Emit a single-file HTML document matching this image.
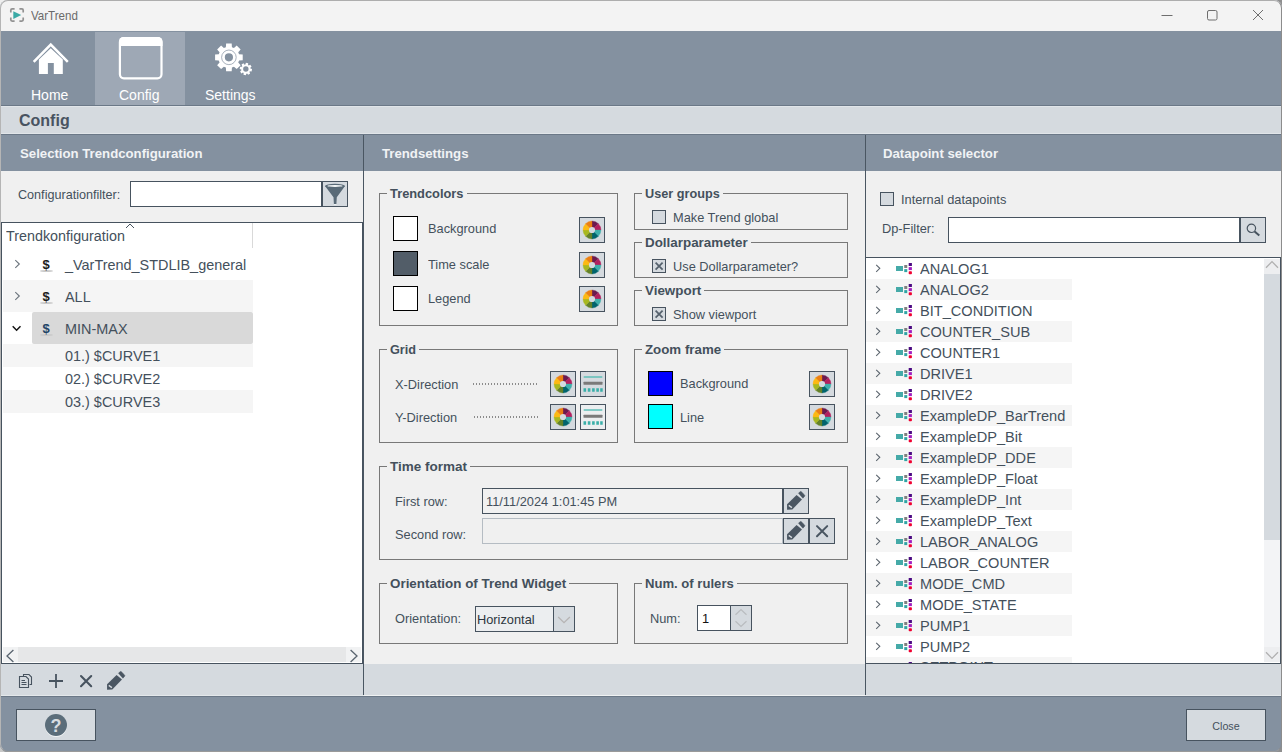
<!DOCTYPE html>
<html><head><meta charset="utf-8"><title>VarTrend</title>
<style>
*{box-sizing:border-box;margin:0;padding:0}
html,body{width:1282px;height:752px;overflow:hidden;background:#8f8f8f}
body{font-family:"Liberation Sans",sans-serif;font-size:13px;color:#44505c;position:relative}
.a{position:absolute}
.win{left:0;top:0;width:1282px;height:752px;background:#8491a0;border-radius:8px;overflow:hidden}
.frame{left:0;top:0;width:1282px;height:752px;border:1px solid #b0b0b0;border-color:#adadad #8c8c8c #9a9a9a #b5b5b5;border-radius:8px;pointer-events:none}
.tb{left:0;top:0;width:1282px;height:31px;background:#f3f3f3}
.t{white-space:nowrap;line-height:16px;margin-top:1px;font-size:13.5px;transform:scaleX(.948);transform-origin:0 0}
.b{font-weight:bold}
.hdr{color:#f1f3f5;font-weight:bold;font-size:13.2px;transform:none}
.lt{background:#d5dadf}
.pn{background:#f0f0f0}
.dk{background:#4a5662}
.fs{border:1px solid #787878}
.lg{background:#f0f0f0;font-weight:bold;font-size:13px;padding:0 3px;line-height:16px;white-space:nowrap;margin-top:1px}
.btn{background:#d5dadf;border:1px solid #47535f}
.sw{border:1px solid #000;width:25px;height:25px}
.cb{width:14px;height:14px;border:1px solid #47535f;background:#d5dadf}
.tree{font-size:14.5px;color:#44505c}
.tree .t{font-size:15px;line-height:18px;transform:scaleX(.962)}
.rt .t{transform:scaleX(.972)}
</style></head><body>
   <div class="a" style="left:0;top:0;width:10px;height:10px;background:#eee"></div><div class="a" style="left:0;top:742px;width:10px;height:10px;background:#c8c8c8"></div>
<div class="a win">
<!-- title bar -->
<div class="a tb"></div>
<div class="a t" style="left:31px;top:7px;font-size:12.2px;color:#6a6a6a">VarTrend</div>
<svg class="a" style="left:0;top:0" width="1282" height="31" viewBox="0 0 1282 31">
<path d="M10.8 12.4 V10.2 Q10.8 8.9 12.1 8.9 H14.6 M19.4 8.9 H21.9 Q23.2 8.9 23.2 10.2 V12.4 M23.2 17.6 V19.8 Q23.2 21.1 21.9 21.1 H19.4 M14.6 21.1 H12.1 Q10.8 21.1 10.8 19.8 V17.6" fill="none" stroke="#929292" stroke-width="1.7"/>
<path d="M13.3 11.2 L21.2 15 L13.3 18.9 Z" fill="#3aa9a5"/>
<path d="M1161.5 15.5 H1172.5" stroke="#6e6e6e" stroke-width="1"/>
<rect x="1207.5" y="10.5" width="9.5" height="9.5" rx="1.5" fill="none" stroke="#6e6e6e" stroke-width="1"/>
<path d="M1253 10 L1263 20 M1263 10 L1253 20" stroke="#6e6e6e" stroke-width="1"/>
</svg>
<!-- toolbar -->
<div class="a" style="left:0;top:31px;width:1282px;height:74px;background:#8491a0"></div>
<div class="a" style="left:95px;top:32px;width:90px;height:73px;background:#9ea8b5"></div>
<div class="a" style="left:0;top:105px;width:1282px;height:1px;background:#6b7887"></div>
<div class="a t" style="left:31px;top:86px;font-size:14px;color:#fff;transform:none">Home</div>
<div class="a t" style="left:119px;top:86px;font-size:14px;color:#fff;transform:none">Config</div>
<div class="a t" style="left:205px;top:86px;font-size:14px;color:#fff;transform:none">Settings</div>
<svg class="a" style="left:0;top:0" width="300" height="106" viewBox="0 0 300 106">
<path d="M33.7 61.9 L50.75 44.6 L67.8 61.9" fill="none" stroke="#fff" stroke-width="2.5"/>
<path d="M38.9 74.1 V59.4 L50.75 48.3 L62.8 59.4 V74.1 H53.8 V63 H47.9 V74.1 Z" fill="#fff"/>
<rect x="119.9" y="38.1" width="41.6" height="40.2" rx="4" ry="4" fill="none" stroke="#fff" stroke-width="2.2"/>
<path d="M119 46 V41.5 a4.5 4.5 0 0 1 4.5 -4.5 H158 a4.5 4.5 0 0 1 4.5 4.5 V46 Z" fill="#fff"/>
<path fill-rule="evenodd" fill="#fff" d="M225.87 47.19 L226.10 43.53 L231.70 43.53 L231.93 47.19 L233.94 48.02 L236.69 45.60 L240.65 49.56 L238.23 52.31 L239.06 54.32 L242.72 54.55 L242.72 60.15 L239.06 60.38 L238.23 62.39 L240.65 65.14 L236.69 69.10 L233.94 66.68 L231.93 67.51 L231.70 71.17 L226.10 71.17 L225.87 67.51 L223.86 66.68 L221.11 69.10 L217.15 65.14 L219.57 62.39 L218.74 60.38 L215.08 60.15 L215.08 54.55 L218.74 54.32 L219.57 52.31 L217.15 49.56 L221.11 45.60 L223.86 48.02 Z M233 57.35 a4.1 4.1 0 1 0 -8.2 0 a4.1 4.1 0 1 0 8.2 0 Z"/>
<circle cx="228.9" cy="57.35" r="7.3" fill="none" stroke="#8491a0" stroke-width="0.7"/>
<path fill-rule="evenodd" fill="#fff" d="M245.39 64.47 L245.91 62.85 L248.21 63.32 L248.06 65.01 L248.76 65.49 L250.28 64.71 L251.57 66.66 L250.26 67.75 L250.43 68.59 L252.05 69.11 L251.58 71.41 L249.89 71.26 L249.41 71.96 L250.19 73.48 L248.24 74.77 L247.15 73.46 L246.31 73.63 L245.79 75.25 L243.49 74.78 L243.64 73.09 L242.94 72.61 L241.42 73.39 L240.13 71.44 L241.44 70.35 L241.27 69.51 L239.65 68.99 L240.12 66.69 L241.81 66.84 L242.29 66.14 L241.51 64.62 L243.46 63.33 L244.55 64.64 Z M248.55 69.05 a2.7 2.7 0 1 0 -5.4 0 a2.7 2.7 0 1 0 5.4 0 Z"/>
</svg>
<!-- title band -->
<div class="a lt" style="left:0;top:106px;width:1282px;height:28px"></div>
<div class="a" style="left:0;top:134px;width:1282px;height:1px;background:#6b7887"></div>
<div class="a" style="left:0;top:106px;width:1282px;height:1px;background:#e1e5e9"></div>
<div class="a" style="left:0;top:133px;width:1282px;height:1px;background:#e1e5e9"></div>
<div class="a t b" style="left:19px;top:111px;font-size:16px;line-height:18px;color:#485361;transform:none">Config</div>
<!-- PANELS placeholder -->
<!-- LEFT PANEL -->
<div class="a" style="left:0;top:135px;width:363px;height:36px;background:#8491a0"></div>
<div class="a t hdr" style="left:20px;top:145px">Selection Trendconfiguration</div>
<div class="a pn" style="left:0;top:171px;width:363px;height:493px"></div>
<div class="a t" style="left:18px;top:186px;font-size:13.3px">Configurationfilter:</div>
<div class="a" style="left:130px;top:181px;width:192px;height:26px;background:#fff;border:1px solid #47535f"></div>
<div class="a btn" style="left:322px;top:181px;width:26px;height:26px">
<svg class="a" style="left:0;top:0" width="24" height="24" viewBox="0 0 24 24"><path d="M2.00 4.00 L10.50 15.30 L10.90 21.90 L13.40 21.90 L13.80 15.30 L22.00 4.00 Z" fill="#596a77"/><ellipse cx="12" cy="3.9000000000000057" rx="10" ry="2.1" fill="#596a77"/><ellipse cx="12" cy="3.90" rx="7.6" ry="1" fill="#f4f6f7"/><path d="M11.00 22.60 H13.30" stroke="#f4f6f7" stroke-width="0.8"/></svg>
</div>
<!-- tree -->
<div class="a" style="left:1px;top:222px;width:362px;height:442px;background:#fff;border:1px solid #47535f"></div>
<div class="a tree" style="left:2px;top:223px;width:360px;height:424px;overflow:hidden">
 <div class="a" style="left:250px;top:0;width:1px;height:25px;background:#d9d9d9"></div>
 <div class="a t" style="left:3.5px;top:3px;font-size:14.9px">Trendkonfiguration</div>
 <svg class="a" style="left:122.5px;top:0px" width="10" height="6" viewBox="0 0 10 6"><path d="M1 5 L5 1 L9 5" fill="none" stroke="#47535f" stroke-width="1"/></svg>
 <div class="a" style="left:1px;top:57px;width:250px;height:32px;background:#f5f5f5"></div>
 <div class="a" style="left:30px;top:89px;width:221px;height:32px;background:#d9d9d9;border-radius:2px"></div>
 <div class="a" style="left:1px;top:121px;width:250px;height:23px;background:#f5f5f5"></div>
 <div class="a" style="left:1px;top:167px;width:250px;height:23px;background:#f5f5f5"></div>
 <div class="a t" style="left:63px;top:32px">_VarTrend_STDLIB_general</div>
 <div class="a t" style="left:63px;top:64px">ALL</div>
 <div class="a t" style="left:63px;top:96px">MIN-MAX</div>
 <div class="a t" style="left:63px;top:123px">01.) $CURVE1</div>
 <div class="a t" style="left:63px;top:146px">02.) $CURVE2</div>
 <div class="a t" style="left:63px;top:169px">03.) $CURVE3</div>
 <div class="a" style="left:38px;top:47px;width:13px;height:2px;border-radius:50%;background:#c9c9c9"></div>
 <div class="a t b" style="left:40.5px;top:33px;line-height:16px;font-size:13px;color:#1c1c1c;transform:none">$</div>
 <div class="a" style="left:38px;top:79px;width:13px;height:2px;border-radius:50%;background:#c9c9c9"></div>
 <div class="a t b" style="left:40.5px;top:65px;line-height:16px;font-size:13px;color:#1c1c1c;transform:none">$</div>
 <div class="a" style="left:38px;top:111px;width:13px;height:2px;border-radius:50%;background:#c9c9c9"></div>
 <div class="a t b" style="left:40.5px;top:97px;line-height:16px;font-size:13px;color:#1f4466;transform:none">$</div>
 <svg class="a" style="left:12px;top:36px" width="7" height="10" viewBox="0 0 7 10"><path d="M1.3 1.2 L5.3 5 L1.3 8.8" fill="none" stroke="#6a737c" stroke-width="1.1"/></svg>
 <svg class="a" style="left:12px;top:68px" width="7" height="10" viewBox="0 0 7 10"><path d="M1.3 1.2 L5.3 5 L1.3 8.8" fill="none" stroke="#6a737c" stroke-width="1.1"/></svg>
 <svg class="a" style="left:9px;top:101px" width="12" height="9" viewBox="0 0 12 9"><path d="M1.7 2.3 L5.6 6.2 L9.5 2.3" fill="none" stroke="#141414" stroke-width="1.5"/></svg>
</div>
<!-- h scrollbar -->
<div class="a" style="left:3px;top:647px;width:358px;height:15px;background:#e6e7e8"></div>
<div class="a" style="left:3px;top:647px;width:15px;height:15px;background:#f1f2f3"></div>
<div class="a" style="left:346px;top:647px;width:15px;height:15px;background:#f1f2f3"></div>
<svg class="a" style="left:5px;top:649px" width="10" height="14" viewBox="0 0 10 14"><path d="M8.4 1 L2 7 L8.4 13" fill="none" stroke="#59646f" stroke-width="1.3"/></svg>
<svg class="a" style="left:349px;top:649px" width="10" height="14" viewBox="0 0 10 14"><path d="M1.6 1 L8 7 L1.6 13" fill="none" stroke="#59646f" stroke-width="1.3"/></svg>
<!-- icon bar -->
<div class="a lt" style="left:0;top:664px;width:363px;height:31px"></div>
<svg class="a" style="left:18px;top:672px" width="16" height="18" viewBox="0 0 16 18"><path d="M5.5 4 L5.5 2.5 L11 2.5 L13.5 5 L13.5 12.5 L11.5 12.5" fill="none" stroke="#47535f" stroke-width="1.1"/><path d="M1.5 4.5 L8 4.5 L10.5 7 L10.5 15.5 L1.5 15.5 Z" fill="none" stroke="#47535f" stroke-width="1.1"/><path d="M3.5 8.5 H7 M3.5 10.5 H8.5 M3.5 12.5 H8.5" stroke="#47535f" stroke-width="1"/></svg>
<svg class="a" style="left:48px;top:673px" width="16" height="16" viewBox="0 0 16 16"><path d="M8 1 V15 M1 8 H15" stroke="#47535f" stroke-width="1.8"/></svg>
<svg class="a" style="left:78px;top:673px" width="16" height="16" viewBox="0 0 16 16"><path d="M3 3 L13.2 13.2 M13.2 3 L3 13.2" stroke="#47535f" stroke-width="2.1" stroke-linecap="round"/></svg>
<svg class="a pen" style="left:106px;top:670px" width="20" height="20" viewBox="0 0 20 20" viewBox="0 0 20 20"><path d="M1.08 14.26 L10.58 4.94 L15.98 9.6 L6.3 19.5 L1.08 19.66 Z" fill="#4a5662"/><path d="M12.5 3.2 L13.9 1.8 a1.1 1.1 0 0 1 1.5 0 L18.5 4.9 a1.1 1.1 0 0 1 0 1.5 L16.9 8.2 Z" fill="#4a5662" stroke="#4a5662" stroke-width="0.5" stroke-linejoin="round"/><path d="M2.76 15.37 L5.92 17.6" stroke="#d5dadf" stroke-width="1.3" fill="none"/></svg>
<div class="a dk" style="left:363px;top:135px;width:1px;height:560px"></div>
<!--LEFT-->
<!-- MIDDLE PANEL -->
<div class="a" style="left:364px;top:135px;width:501px;height:36px;background:#8491a0"></div>
<div class="a t hdr" style="left:382px;top:145px">Trendsettings</div>
<div class="a pn" style="left:364px;top:171px;width:501px;height:493px"></div>
<div class="a lt" style="left:364px;top:664px;width:501px;height:31px"></div>
<div class="a fs" style="left:379px;top:193px;width:239px;height:133px"></div>
<div class="a lg" style="left:387px;top:185px;font-size:12.85px">Trendcolors</div>
<div class="a sw" style="left:393px;top:216px;background:#fff"></div>
<div class="a sw" style="left:393px;top:251px;background:#525d68"></div>
<div class="a sw" style="left:393px;top:286px;background:#fff"></div>
<div class="a t" style="left:428px;top:220px;">Background</div>
<div class="a t" style="left:428px;top:256px;">Time scale</div>
<div class="a t" style="left:428px;top:290px;">Legend</div>
<div class="a btn" style="left:579px;top:217px;width:26px;height:26px"><svg class="a" style="left:2px;top:2px" width="20" height="20" viewBox="-10 -10 20 20"><path d="M0 0 L0 -9 A9 9 0 0 1 6.364 -6.364 Z" fill="#6b1a4f" stroke="#6b1a4f" stroke-width="0.35"/>
<path d="M0 0 L6.364 -6.364 A9 9 0 0 1 9 0 Z" fill="#b3205f" stroke="#b3205f" stroke-width="0.35"/>
<path d="M0 0 L9 0 A9 9 0 0 1 6.364 6.364 Z" fill="#3fb0ac" stroke="#3fb0ac" stroke-width="0.35"/>
<path d="M0 0 L6.364 6.364 A9 9 0 0 1 0 9 Z" fill="#00646e" stroke="#00646e" stroke-width="0.35"/>
<path d="M0 0 L0 9 A9 9 0 0 1 -6.364 6.364 Z" fill="#648229" stroke="#648229" stroke-width="0.35"/>
<path d="M0 0 L-6.364 6.364 A9 9 0 0 1 -9 0 Z" fill="#a8b820" stroke="#a8b820" stroke-width="0.35"/>
<path d="M0 0 L-9 0 A9 9 0 0 1 -6.364 -6.364 Z" fill="#fdb913" stroke="#fdb913" stroke-width="0.35"/>
<path d="M0 0 L-6.364 -6.364 A9 9 0 0 1 0 -9 Z" fill="#eb7f13" stroke="#eb7f13" stroke-width="0.35"/>
<circle cx="0" cy="0" r="3.1" fill="#d5dadf"/></svg></div>
<div class="a btn" style="left:579px;top:252px;width:26px;height:26px"><svg class="a" style="left:2px;top:2px" width="20" height="20" viewBox="-10 -10 20 20"><path d="M0 0 L0 -9 A9 9 0 0 1 6.364 -6.364 Z" fill="#6b1a4f" stroke="#6b1a4f" stroke-width="0.35"/>
<path d="M0 0 L6.364 -6.364 A9 9 0 0 1 9 0 Z" fill="#b3205f" stroke="#b3205f" stroke-width="0.35"/>
<path d="M0 0 L9 0 A9 9 0 0 1 6.364 6.364 Z" fill="#3fb0ac" stroke="#3fb0ac" stroke-width="0.35"/>
<path d="M0 0 L6.364 6.364 A9 9 0 0 1 0 9 Z" fill="#00646e" stroke="#00646e" stroke-width="0.35"/>
<path d="M0 0 L0 9 A9 9 0 0 1 -6.364 6.364 Z" fill="#648229" stroke="#648229" stroke-width="0.35"/>
<path d="M0 0 L-6.364 6.364 A9 9 0 0 1 -9 0 Z" fill="#a8b820" stroke="#a8b820" stroke-width="0.35"/>
<path d="M0 0 L-9 0 A9 9 0 0 1 -6.364 -6.364 Z" fill="#fdb913" stroke="#fdb913" stroke-width="0.35"/>
<path d="M0 0 L-6.364 -6.364 A9 9 0 0 1 0 -9 Z" fill="#eb7f13" stroke="#eb7f13" stroke-width="0.35"/>
<circle cx="0" cy="0" r="3.1" fill="#d5dadf"/></svg></div>
<div class="a btn" style="left:579px;top:286px;width:26px;height:26px"><svg class="a" style="left:2px;top:2px" width="20" height="20" viewBox="-10 -10 20 20"><path d="M0 0 L0 -9 A9 9 0 0 1 6.364 -6.364 Z" fill="#6b1a4f" stroke="#6b1a4f" stroke-width="0.35"/>
<path d="M0 0 L6.364 -6.364 A9 9 0 0 1 9 0 Z" fill="#b3205f" stroke="#b3205f" stroke-width="0.35"/>
<path d="M0 0 L9 0 A9 9 0 0 1 6.364 6.364 Z" fill="#3fb0ac" stroke="#3fb0ac" stroke-width="0.35"/>
<path d="M0 0 L6.364 6.364 A9 9 0 0 1 0 9 Z" fill="#00646e" stroke="#00646e" stroke-width="0.35"/>
<path d="M0 0 L0 9 A9 9 0 0 1 -6.364 6.364 Z" fill="#648229" stroke="#648229" stroke-width="0.35"/>
<path d="M0 0 L-6.364 6.364 A9 9 0 0 1 -9 0 Z" fill="#a8b820" stroke="#a8b820" stroke-width="0.35"/>
<path d="M0 0 L-9 0 A9 9 0 0 1 -6.364 -6.364 Z" fill="#fdb913" stroke="#fdb913" stroke-width="0.35"/>
<path d="M0 0 L-6.364 -6.364 A9 9 0 0 1 0 -9 Z" fill="#eb7f13" stroke="#eb7f13" stroke-width="0.35"/>
<circle cx="0" cy="0" r="3.1" fill="#d5dadf"/></svg></div>
<div class="a fs" style="left:634px;top:193px;width:214px;height:37px"></div>
<div class="a lg" style="left:642px;top:185px;font-size:12.7px">User groups</div>
<div class="a cb" style="left:652px;top:210px"></div>
<div class="a t" style="left:673px;top:209px;">Make Trend global</div>
<div class="a fs" style="left:634px;top:242px;width:214px;height:36px"></div>
<div class="a lg" style="left:642px;top:234px;font-size:13.4px">Dollarparameter</div>
<div class="a cb" style="left:652px;top:259px"><svg class="a" style="left:1px;top:1px" width="10" height="10" viewBox="0 0 10 10"><path d="M1.6 1.6 L8.6 8.6 M8.6 1.6 L1.6 8.6" stroke="#55616d" stroke-width="1.7" fill="none"/></svg></div>
<div class="a t" style="left:673px;top:258px;">Use Dollarparameter?</div>
<div class="a fs" style="left:634px;top:290px;width:214px;height:36px"></div>
<div class="a lg" style="left:642px;top:282px;font-size:13.4px">Viewport</div>
<div class="a cb" style="left:652px;top:307px"><svg class="a" style="left:1px;top:1px" width="10" height="10" viewBox="0 0 10 10"><path d="M1.6 1.6 L8.6 8.6 M8.6 1.6 L1.6 8.6" stroke="#55616d" stroke-width="1.7" fill="none"/></svg></div>
<div class="a t" style="left:673px;top:306px;">Show viewport</div>
<div class="a fs" style="left:379px;top:349px;width:239px;height:94px"></div>
<div class="a lg" style="left:387px;top:341px;font-size:12.7px">Grid</div>
<div class="a t" style="left:395px;top:376px;">X-Direction</div>
<div class="a t" style="left:395px;top:409px;">Y-Direction</div>
<div class="a" style="left:473px;top:383px;width:64px;height:2px;background:repeating-linear-gradient(90deg,#8b8b8b 0 1px,transparent 1px 3px)"></div>
<div class="a" style="left:474px;top:416px;width:64px;height:2px;background:repeating-linear-gradient(90deg,#8b8b8b 0 1px,transparent 1px 3px)"></div>
<div class="a btn" style="left:550px;top:371px;width:26px;height:26px"><svg class="a" style="left:2px;top:2px" width="20" height="20" viewBox="-10 -10 20 20"><path d="M0 0 L0 -9 A9 9 0 0 1 6.364 -6.364 Z" fill="#6b1a4f" stroke="#6b1a4f" stroke-width="0.35"/>
<path d="M0 0 L6.364 -6.364 A9 9 0 0 1 9 0 Z" fill="#b3205f" stroke="#b3205f" stroke-width="0.35"/>
<path d="M0 0 L9 0 A9 9 0 0 1 6.364 6.364 Z" fill="#3fb0ac" stroke="#3fb0ac" stroke-width="0.35"/>
<path d="M0 0 L6.364 6.364 A9 9 0 0 1 0 9 Z" fill="#00646e" stroke="#00646e" stroke-width="0.35"/>
<path d="M0 0 L0 9 A9 9 0 0 1 -6.364 6.364 Z" fill="#648229" stroke="#648229" stroke-width="0.35"/>
<path d="M0 0 L-6.364 6.364 A9 9 0 0 1 -9 0 Z" fill="#a8b820" stroke="#a8b820" stroke-width="0.35"/>
<path d="M0 0 L-9 0 A9 9 0 0 1 -6.364 -6.364 Z" fill="#fdb913" stroke="#fdb913" stroke-width="0.35"/>
<path d="M0 0 L-6.364 -6.364 A9 9 0 0 1 0 -9 Z" fill="#eb7f13" stroke="#eb7f13" stroke-width="0.35"/>
<circle cx="0" cy="0" r="3.1" fill="#d5dadf"/></svg></div>
<div class="a btn" style="left:550px;top:404px;width:26px;height:26px"><svg class="a" style="left:2px;top:2px" width="20" height="20" viewBox="-10 -10 20 20"><path d="M0 0 L0 -9 A9 9 0 0 1 6.364 -6.364 Z" fill="#6b1a4f" stroke="#6b1a4f" stroke-width="0.35"/>
<path d="M0 0 L6.364 -6.364 A9 9 0 0 1 9 0 Z" fill="#b3205f" stroke="#b3205f" stroke-width="0.35"/>
<path d="M0 0 L9 0 A9 9 0 0 1 6.364 6.364 Z" fill="#3fb0ac" stroke="#3fb0ac" stroke-width="0.35"/>
<path d="M0 0 L6.364 6.364 A9 9 0 0 1 0 9 Z" fill="#00646e" stroke="#00646e" stroke-width="0.35"/>
<path d="M0 0 L0 9 A9 9 0 0 1 -6.364 6.364 Z" fill="#648229" stroke="#648229" stroke-width="0.35"/>
<path d="M0 0 L-6.364 6.364 A9 9 0 0 1 -9 0 Z" fill="#a8b820" stroke="#a8b820" stroke-width="0.35"/>
<path d="M0 0 L-9 0 A9 9 0 0 1 -6.364 -6.364 Z" fill="#fdb913" stroke="#fdb913" stroke-width="0.35"/>
<path d="M0 0 L-6.364 -6.364 A9 9 0 0 1 0 -9 Z" fill="#eb7f13" stroke="#eb7f13" stroke-width="0.35"/>
<circle cx="0" cy="0" r="3.1" fill="#d5dadf"/></svg></div>
<div class="a btn" style="left:580px;top:371px;width:26px;height:26px"><svg class="a" style="left:0;top:0" width="24" height="24" viewBox="0 0 24 24"><rect x="2.5" y="4.3" width="19" height="1.5" rx="0.7" fill="#5fbfb8"/><rect x="2.5" y="9.8" width="19" height="3" rx="0.5" fill="#7a7a7a"/><path d="M2.5 16.2h2.6v3.6h-2.6z M6.8 16.2h2.6v3.6h-2.6z M11.1 16.2h2.6v3.6h-2.6z M15.3 16.2h2.6v3.6h-2.6z M19.2 16.2h2.5v3.6h-2.5z" fill="#3aafa9"/></svg></div>
<div class="a btn" style="left:580px;top:404px;width:26px;height:26px;background:#eceef0"><svg class="a" style="left:0;top:0" width="24" height="24" viewBox="0 0 24 24"><rect x="2.5" y="4.3" width="19" height="1.5" rx="0.7" fill="#5fbfb8"/><rect x="2.5" y="9.8" width="19" height="3" rx="0.5" fill="#7a7a7a"/><path d="M2.5 16.2h2.6v3.6h-2.6z M6.8 16.2h2.6v3.6h-2.6z M11.1 16.2h2.6v3.6h-2.6z M15.3 16.2h2.6v3.6h-2.6z M19.2 16.2h2.5v3.6h-2.5z" fill="#3aafa9"/></svg></div>
<div class="a fs" style="left:634px;top:349px;width:214px;height:94px"></div>
<div class="a lg" style="left:642px;top:341px;font-size:13.3px">Zoom frame</div>
<div class="a sw" style="left:648px;top:371px;background:#0000ff"></div>
<div class="a sw" style="left:648px;top:404px;background:#00ffff"></div>
<div class="a t" style="left:680px;top:375px;">Background</div>
<div class="a t" style="left:680px;top:409px;">Line</div>
<div class="a btn" style="left:809px;top:371px;width:26px;height:26px"><svg class="a" style="left:2px;top:2px" width="20" height="20" viewBox="-10 -10 20 20"><path d="M0 0 L0 -9 A9 9 0 0 1 6.364 -6.364 Z" fill="#6b1a4f" stroke="#6b1a4f" stroke-width="0.35"/>
<path d="M0 0 L6.364 -6.364 A9 9 0 0 1 9 0 Z" fill="#b3205f" stroke="#b3205f" stroke-width="0.35"/>
<path d="M0 0 L9 0 A9 9 0 0 1 6.364 6.364 Z" fill="#3fb0ac" stroke="#3fb0ac" stroke-width="0.35"/>
<path d="M0 0 L6.364 6.364 A9 9 0 0 1 0 9 Z" fill="#00646e" stroke="#00646e" stroke-width="0.35"/>
<path d="M0 0 L0 9 A9 9 0 0 1 -6.364 6.364 Z" fill="#648229" stroke="#648229" stroke-width="0.35"/>
<path d="M0 0 L-6.364 6.364 A9 9 0 0 1 -9 0 Z" fill="#a8b820" stroke="#a8b820" stroke-width="0.35"/>
<path d="M0 0 L-9 0 A9 9 0 0 1 -6.364 -6.364 Z" fill="#fdb913" stroke="#fdb913" stroke-width="0.35"/>
<path d="M0 0 L-6.364 -6.364 A9 9 0 0 1 0 -9 Z" fill="#eb7f13" stroke="#eb7f13" stroke-width="0.35"/>
<circle cx="0" cy="0" r="3.1" fill="#d5dadf"/></svg></div>
<div class="a btn" style="left:809px;top:404px;width:26px;height:26px"><svg class="a" style="left:2px;top:2px" width="20" height="20" viewBox="-10 -10 20 20"><path d="M0 0 L0 -9 A9 9 0 0 1 6.364 -6.364 Z" fill="#6b1a4f" stroke="#6b1a4f" stroke-width="0.35"/>
<path d="M0 0 L6.364 -6.364 A9 9 0 0 1 9 0 Z" fill="#b3205f" stroke="#b3205f" stroke-width="0.35"/>
<path d="M0 0 L9 0 A9 9 0 0 1 6.364 6.364 Z" fill="#3fb0ac" stroke="#3fb0ac" stroke-width="0.35"/>
<path d="M0 0 L6.364 6.364 A9 9 0 0 1 0 9 Z" fill="#00646e" stroke="#00646e" stroke-width="0.35"/>
<path d="M0 0 L0 9 A9 9 0 0 1 -6.364 6.364 Z" fill="#648229" stroke="#648229" stroke-width="0.35"/>
<path d="M0 0 L-6.364 6.364 A9 9 0 0 1 -9 0 Z" fill="#a8b820" stroke="#a8b820" stroke-width="0.35"/>
<path d="M0 0 L-9 0 A9 9 0 0 1 -6.364 -6.364 Z" fill="#fdb913" stroke="#fdb913" stroke-width="0.35"/>
<path d="M0 0 L-6.364 -6.364 A9 9 0 0 1 0 -9 Z" fill="#eb7f13" stroke="#eb7f13" stroke-width="0.35"/>
<circle cx="0" cy="0" r="3.1" fill="#d5dadf"/></svg></div>
<div class="a fs" style="left:379px;top:466px;width:469px;height:94px"></div>
<div class="a lg" style="left:387px;top:458px;font-size:13.5px">Time format</div>
<div class="a t" style="left:395px;top:493px;">First row:</div>
<div class="a t" style="left:395px;top:526px;">Second row:</div>
<div class="a" style="left:482px;top:488px;width:301px;height:26px;background:#f1f1f1;border:1px solid #47535f"></div>
<div class="a t" style="left:486px;top:493px;">11/11/2024 1:01:45 PM</div>
<div class="a" style="left:482px;top:518px;width:301px;height:26px;background:#f0f0f0;border:1px solid #b5bcc3"></div>
<div class="a btn" style="left:783px;top:488px;width:26px;height:26px"><svg class="a" style="left:1.7px;top:1.2px" width="20" height="20" viewBox="0 0 20 20"><path d="M1.08 14.26 L10.58 4.94 L15.98 9.6 L6.3 19.5 L1.08 19.66 Z" fill="#4a5662"/><path d="M12.5 3.2 L13.9 1.8 a1.1 1.1 0 0 1 1.5 0 L18.5 4.9 a1.1 1.1 0 0 1 0 1.5 L16.9 8.2 Z" fill="#4a5662" stroke="#4a5662" stroke-width="0.5" stroke-linejoin="round"/><path d="M2.76 15.37 L5.92 17.6" stroke="#d5dadf" stroke-width="1.3" fill="none"/></svg></div>
<div class="a btn" style="left:783px;top:518px;width:26px;height:26px"><svg class="a" style="left:1.7px;top:1.2px" width="20" height="20" viewBox="0 0 20 20"><path d="M1.08 14.26 L10.58 4.94 L15.98 9.6 L6.3 19.5 L1.08 19.66 Z" fill="#4a5662"/><path d="M12.5 3.2 L13.9 1.8 a1.1 1.1 0 0 1 1.5 0 L18.5 4.9 a1.1 1.1 0 0 1 0 1.5 L16.9 8.2 Z" fill="#4a5662" stroke="#4a5662" stroke-width="0.5" stroke-linejoin="round"/><path d="M2.76 15.37 L5.92 17.6" stroke="#d5dadf" stroke-width="1.3" fill="none"/></svg></div>
<div class="a btn" style="left:809px;top:518px;width:26px;height:26px"><svg class="a" style="left:5px;top:5px" width="14" height="14" viewBox="0 0 14 14"><path d="M2 2.1 L12.2 12.3 M12.2 2.1 L2 12.3" stroke="#4a5662" stroke-width="2" stroke-linecap="round" fill="none"/></svg></div>
<div class="a fs" style="left:379px;top:583px;width:239px;height:61px"></div>
<div class="a lg" style="left:387px;top:575px;font-size:13.4px">Orientation of Trend Widget</div>
<div class="a t" style="left:395px;top:610px;">Orientation:</div>
<div class="a" style="left:475px;top:606px;width:100px;height:26px;background:#eceef0;border:1px solid #47535f"></div>
<div class="a" style="left:553px;top:606px;width:22px;height:26px;background:#d5dadf;border:1px solid #47535f"></div>
<svg class="a" style="left:557px;top:615px" width="14" height="9" viewBox="0 0 14 9"><path d="M1.2 2 L7 7.7 L12.9 2" fill="none" stroke="#b6b4b4" stroke-width="1.3"/></svg>
<div class="a t" style="left:477px;top:611px;color:#2d3740">Horizontal</div>
<div class="a fs" style="left:634px;top:583px;width:214px;height:61px"></div>
<div class="a lg" style="left:642px;top:575px;font-size:13.1px">Num. of rulers</div>
<div class="a t" style="left:650px;top:610px;">Num:</div>
<div class="a" style="left:697px;top:605px;width:55px;height:26px;background:#fff;border:1px solid #47535f"></div>
<div class="a" style="left:730px;top:606px;width:21px;height:24px;background:#d5dadf;border-left:1px solid #47535f"></div>
<svg class="a" style="left:735px;top:608px" width="12" height="20" viewBox="0 0 12 20"><path d="M0.5 6.8 L6 1.5 L11.5 6.8 M0.5 13.2 L6 18.5 L11.5 13.2" fill="none" stroke="#b9bcbf" stroke-width="1.2"/></svg>
<div class="a t" style="left:702px;top:610px;color:#111">1</div>
<div class="a dk" style="left:865px;top:135px;width:1px;height:560px"></div>
<!--MID-->
<!-- RIGHT PANEL -->
<div class="a" style="left:866px;top:135px;width:416px;height:36px;background:#8491a0"></div>
<div class="a t hdr" style="left:883px;top:145px">Datapoint selector</div>
<div class="a pn" style="left:866px;top:171px;width:416px;height:87px"></div>
<div class="a cb" style="left:880px;top:192px"></div>
<div class="a t" style="left:901px;top:191px">Internal datapoints</div>
<div class="a t" style="left:882px;top:220px">Dp-Filter:</div>
<div class="a" style="left:948px;top:217px;width:292px;height:26px;background:#fff;border:1px solid #47535f"></div>
<div class="a btn" style="left:1240px;top:217px;width:26px;height:26px"><svg class="a" style="left:4px;top:4px" width="16" height="16" viewBox="0 0 16 16"><circle cx="6.4" cy="6.3" r="4.2" fill="none" stroke="#47535f" stroke-width="1.2"/><path d="M9.6 9.5 L14.3 13.6" stroke="#47535f" stroke-width="2" stroke-linecap="butt"/></svg></div>
<div class="a" style="left:865px;top:257px;width:416px;height:407px;background:#fff;border:1px solid #47535f"></div>
<div class="a tree rt" style="left:866px;top:258px;width:398px;height:405px;overflow:hidden">
 <svg class="a" style="left:9px;top:6px" width="6" height="9" viewBox="0 0 6 9"><path d="M1.2 0.8 L4.8 4.3 L1.2 7.8" fill="none" stroke="#5d666f" stroke-width="1.1"/></svg>
 <svg class="a" style="left:30px;top:4px" width="17" height="13" viewBox="0 0 17 13"><rect x="0" y="4" width="7" height="5" fill="#45aaa8"/><rect x="8.25" y="3" width="3" height="3" fill="#808080"/><rect x="8.25" y="7.1" width="3" height="3" fill="#30a5a5"/><rect x="12.7" y="1" width="3.2" height="3" fill="#4b0a82"/><rect x="12.7" y="5.1" width="3.2" height="3" fill="#a21fc0"/><rect x="12.7" y="9.3" width="3.2" height="3" rx="0.8" fill="#f00030"/></svg>
 <div class="a t" style="left:54px;top:1px">ANALOG1</div>
 <div class="a" style="left:0;top:21px;width:206px;height:21px;background:#f5f5f5"></div>
 <svg class="a" style="left:9px;top:27px" width="6" height="9" viewBox="0 0 6 9"><path d="M1.2 0.8 L4.8 4.3 L1.2 7.8" fill="none" stroke="#5d666f" stroke-width="1.1"/></svg>
 <svg class="a" style="left:30px;top:25px" width="17" height="13" viewBox="0 0 17 13"><rect x="0" y="4" width="7" height="5" fill="#45aaa8"/><rect x="8.25" y="3" width="3" height="3" fill="#808080"/><rect x="8.25" y="7.1" width="3" height="3" fill="#30a5a5"/><rect x="12.7" y="1" width="3.2" height="3" fill="#4b0a82"/><rect x="12.7" y="5.1" width="3.2" height="3" fill="#a21fc0"/><rect x="12.7" y="9.3" width="3.2" height="3" rx="0.8" fill="#f00030"/></svg>
 <div class="a t" style="left:54px;top:22px">ANALOG2</div>
 <svg class="a" style="left:9px;top:48px" width="6" height="9" viewBox="0 0 6 9"><path d="M1.2 0.8 L4.8 4.3 L1.2 7.8" fill="none" stroke="#5d666f" stroke-width="1.1"/></svg>
 <svg class="a" style="left:30px;top:46px" width="17" height="13" viewBox="0 0 17 13"><rect x="0" y="4" width="7" height="5" fill="#45aaa8"/><rect x="8.25" y="3" width="3" height="3" fill="#808080"/><rect x="8.25" y="7.1" width="3" height="3" fill="#30a5a5"/><rect x="12.7" y="1" width="3.2" height="3" fill="#4b0a82"/><rect x="12.7" y="5.1" width="3.2" height="3" fill="#a21fc0"/><rect x="12.7" y="9.3" width="3.2" height="3" rx="0.8" fill="#f00030"/></svg>
 <div class="a t" style="left:54px;top:43px">BIT_CONDITION</div>
 <div class="a" style="left:0;top:63px;width:206px;height:21px;background:#f5f5f5"></div>
 <svg class="a" style="left:9px;top:69px" width="6" height="9" viewBox="0 0 6 9"><path d="M1.2 0.8 L4.8 4.3 L1.2 7.8" fill="none" stroke="#5d666f" stroke-width="1.1"/></svg>
 <svg class="a" style="left:30px;top:67px" width="17" height="13" viewBox="0 0 17 13"><rect x="0" y="4" width="7" height="5" fill="#45aaa8"/><rect x="8.25" y="3" width="3" height="3" fill="#808080"/><rect x="8.25" y="7.1" width="3" height="3" fill="#30a5a5"/><rect x="12.7" y="1" width="3.2" height="3" fill="#4b0a82"/><rect x="12.7" y="5.1" width="3.2" height="3" fill="#a21fc0"/><rect x="12.7" y="9.3" width="3.2" height="3" rx="0.8" fill="#f00030"/></svg>
 <div class="a t" style="left:54px;top:64px">COUNTER_SUB</div>
 <svg class="a" style="left:9px;top:90px" width="6" height="9" viewBox="0 0 6 9"><path d="M1.2 0.8 L4.8 4.3 L1.2 7.8" fill="none" stroke="#5d666f" stroke-width="1.1"/></svg>
 <svg class="a" style="left:30px;top:88px" width="17" height="13" viewBox="0 0 17 13"><rect x="0" y="4" width="7" height="5" fill="#45aaa8"/><rect x="8.25" y="3" width="3" height="3" fill="#808080"/><rect x="8.25" y="7.1" width="3" height="3" fill="#30a5a5"/><rect x="12.7" y="1" width="3.2" height="3" fill="#4b0a82"/><rect x="12.7" y="5.1" width="3.2" height="3" fill="#a21fc0"/><rect x="12.7" y="9.3" width="3.2" height="3" rx="0.8" fill="#f00030"/></svg>
 <div class="a t" style="left:54px;top:85px">COUNTER1</div>
 <div class="a" style="left:0;top:105px;width:206px;height:21px;background:#f5f5f5"></div>
 <svg class="a" style="left:9px;top:111px" width="6" height="9" viewBox="0 0 6 9"><path d="M1.2 0.8 L4.8 4.3 L1.2 7.8" fill="none" stroke="#5d666f" stroke-width="1.1"/></svg>
 <svg class="a" style="left:30px;top:109px" width="17" height="13" viewBox="0 0 17 13"><rect x="0" y="4" width="7" height="5" fill="#45aaa8"/><rect x="8.25" y="3" width="3" height="3" fill="#808080"/><rect x="8.25" y="7.1" width="3" height="3" fill="#30a5a5"/><rect x="12.7" y="1" width="3.2" height="3" fill="#4b0a82"/><rect x="12.7" y="5.1" width="3.2" height="3" fill="#a21fc0"/><rect x="12.7" y="9.3" width="3.2" height="3" rx="0.8" fill="#f00030"/></svg>
 <div class="a t" style="left:54px;top:106px">DRIVE1</div>
 <svg class="a" style="left:9px;top:132px" width="6" height="9" viewBox="0 0 6 9"><path d="M1.2 0.8 L4.8 4.3 L1.2 7.8" fill="none" stroke="#5d666f" stroke-width="1.1"/></svg>
 <svg class="a" style="left:30px;top:130px" width="17" height="13" viewBox="0 0 17 13"><rect x="0" y="4" width="7" height="5" fill="#45aaa8"/><rect x="8.25" y="3" width="3" height="3" fill="#808080"/><rect x="8.25" y="7.1" width="3" height="3" fill="#30a5a5"/><rect x="12.7" y="1" width="3.2" height="3" fill="#4b0a82"/><rect x="12.7" y="5.1" width="3.2" height="3" fill="#a21fc0"/><rect x="12.7" y="9.3" width="3.2" height="3" rx="0.8" fill="#f00030"/></svg>
 <div class="a t" style="left:54px;top:127px">DRIVE2</div>
 <div class="a" style="left:0;top:147px;width:206px;height:21px;background:#f5f5f5"></div>
 <svg class="a" style="left:9px;top:153px" width="6" height="9" viewBox="0 0 6 9"><path d="M1.2 0.8 L4.8 4.3 L1.2 7.8" fill="none" stroke="#5d666f" stroke-width="1.1"/></svg>
 <svg class="a" style="left:30px;top:151px" width="17" height="13" viewBox="0 0 17 13"><rect x="0" y="4" width="7" height="5" fill="#45aaa8"/><rect x="8.25" y="3" width="3" height="3" fill="#808080"/><rect x="8.25" y="7.1" width="3" height="3" fill="#30a5a5"/><rect x="12.7" y="1" width="3.2" height="3" fill="#4b0a82"/><rect x="12.7" y="5.1" width="3.2" height="3" fill="#a21fc0"/><rect x="12.7" y="9.3" width="3.2" height="3" rx="0.8" fill="#f00030"/></svg>
 <div class="a t" style="left:54px;top:148px">ExampleDP_BarTrend</div>
 <svg class="a" style="left:9px;top:174px" width="6" height="9" viewBox="0 0 6 9"><path d="M1.2 0.8 L4.8 4.3 L1.2 7.8" fill="none" stroke="#5d666f" stroke-width="1.1"/></svg>
 <svg class="a" style="left:30px;top:172px" width="17" height="13" viewBox="0 0 17 13"><rect x="0" y="4" width="7" height="5" fill="#45aaa8"/><rect x="8.25" y="3" width="3" height="3" fill="#808080"/><rect x="8.25" y="7.1" width="3" height="3" fill="#30a5a5"/><rect x="12.7" y="1" width="3.2" height="3" fill="#4b0a82"/><rect x="12.7" y="5.1" width="3.2" height="3" fill="#a21fc0"/><rect x="12.7" y="9.3" width="3.2" height="3" rx="0.8" fill="#f00030"/></svg>
 <div class="a t" style="left:54px;top:169px">ExampleDP_Bit</div>
 <div class="a" style="left:0;top:189px;width:206px;height:21px;background:#f5f5f5"></div>
 <svg class="a" style="left:9px;top:195px" width="6" height="9" viewBox="0 0 6 9"><path d="M1.2 0.8 L4.8 4.3 L1.2 7.8" fill="none" stroke="#5d666f" stroke-width="1.1"/></svg>
 <svg class="a" style="left:30px;top:193px" width="17" height="13" viewBox="0 0 17 13"><rect x="0" y="4" width="7" height="5" fill="#45aaa8"/><rect x="8.25" y="3" width="3" height="3" fill="#808080"/><rect x="8.25" y="7.1" width="3" height="3" fill="#30a5a5"/><rect x="12.7" y="1" width="3.2" height="3" fill="#4b0a82"/><rect x="12.7" y="5.1" width="3.2" height="3" fill="#a21fc0"/><rect x="12.7" y="9.3" width="3.2" height="3" rx="0.8" fill="#f00030"/></svg>
 <div class="a t" style="left:54px;top:190px">ExampleDP_DDE</div>
 <svg class="a" style="left:9px;top:216px" width="6" height="9" viewBox="0 0 6 9"><path d="M1.2 0.8 L4.8 4.3 L1.2 7.8" fill="none" stroke="#5d666f" stroke-width="1.1"/></svg>
 <svg class="a" style="left:30px;top:214px" width="17" height="13" viewBox="0 0 17 13"><rect x="0" y="4" width="7" height="5" fill="#45aaa8"/><rect x="8.25" y="3" width="3" height="3" fill="#808080"/><rect x="8.25" y="7.1" width="3" height="3" fill="#30a5a5"/><rect x="12.7" y="1" width="3.2" height="3" fill="#4b0a82"/><rect x="12.7" y="5.1" width="3.2" height="3" fill="#a21fc0"/><rect x="12.7" y="9.3" width="3.2" height="3" rx="0.8" fill="#f00030"/></svg>
 <div class="a t" style="left:54px;top:211px">ExampleDP_Float</div>
 <div class="a" style="left:0;top:231px;width:206px;height:21px;background:#f5f5f5"></div>
 <svg class="a" style="left:9px;top:237px" width="6" height="9" viewBox="0 0 6 9"><path d="M1.2 0.8 L4.8 4.3 L1.2 7.8" fill="none" stroke="#5d666f" stroke-width="1.1"/></svg>
 <svg class="a" style="left:30px;top:235px" width="17" height="13" viewBox="0 0 17 13"><rect x="0" y="4" width="7" height="5" fill="#45aaa8"/><rect x="8.25" y="3" width="3" height="3" fill="#808080"/><rect x="8.25" y="7.1" width="3" height="3" fill="#30a5a5"/><rect x="12.7" y="1" width="3.2" height="3" fill="#4b0a82"/><rect x="12.7" y="5.1" width="3.2" height="3" fill="#a21fc0"/><rect x="12.7" y="9.3" width="3.2" height="3" rx="0.8" fill="#f00030"/></svg>
 <div class="a t" style="left:54px;top:232px">ExampleDP_Int</div>
 <svg class="a" style="left:9px;top:258px" width="6" height="9" viewBox="0 0 6 9"><path d="M1.2 0.8 L4.8 4.3 L1.2 7.8" fill="none" stroke="#5d666f" stroke-width="1.1"/></svg>
 <svg class="a" style="left:30px;top:256px" width="17" height="13" viewBox="0 0 17 13"><rect x="0" y="4" width="7" height="5" fill="#45aaa8"/><rect x="8.25" y="3" width="3" height="3" fill="#808080"/><rect x="8.25" y="7.1" width="3" height="3" fill="#30a5a5"/><rect x="12.7" y="1" width="3.2" height="3" fill="#4b0a82"/><rect x="12.7" y="5.1" width="3.2" height="3" fill="#a21fc0"/><rect x="12.7" y="9.3" width="3.2" height="3" rx="0.8" fill="#f00030"/></svg>
 <div class="a t" style="left:54px;top:253px">ExampleDP_Text</div>
 <div class="a" style="left:0;top:273px;width:206px;height:21px;background:#f5f5f5"></div>
 <svg class="a" style="left:9px;top:279px" width="6" height="9" viewBox="0 0 6 9"><path d="M1.2 0.8 L4.8 4.3 L1.2 7.8" fill="none" stroke="#5d666f" stroke-width="1.1"/></svg>
 <svg class="a" style="left:30px;top:277px" width="17" height="13" viewBox="0 0 17 13"><rect x="0" y="4" width="7" height="5" fill="#45aaa8"/><rect x="8.25" y="3" width="3" height="3" fill="#808080"/><rect x="8.25" y="7.1" width="3" height="3" fill="#30a5a5"/><rect x="12.7" y="1" width="3.2" height="3" fill="#4b0a82"/><rect x="12.7" y="5.1" width="3.2" height="3" fill="#a21fc0"/><rect x="12.7" y="9.3" width="3.2" height="3" rx="0.8" fill="#f00030"/></svg>
 <div class="a t" style="left:54px;top:274px">LABOR_ANALOG</div>
 <svg class="a" style="left:9px;top:300px" width="6" height="9" viewBox="0 0 6 9"><path d="M1.2 0.8 L4.8 4.3 L1.2 7.8" fill="none" stroke="#5d666f" stroke-width="1.1"/></svg>
 <svg class="a" style="left:30px;top:298px" width="17" height="13" viewBox="0 0 17 13"><rect x="0" y="4" width="7" height="5" fill="#45aaa8"/><rect x="8.25" y="3" width="3" height="3" fill="#808080"/><rect x="8.25" y="7.1" width="3" height="3" fill="#30a5a5"/><rect x="12.7" y="1" width="3.2" height="3" fill="#4b0a82"/><rect x="12.7" y="5.1" width="3.2" height="3" fill="#a21fc0"/><rect x="12.7" y="9.3" width="3.2" height="3" rx="0.8" fill="#f00030"/></svg>
 <div class="a t" style="left:54px;top:295px">LABOR_COUNTER</div>
 <div class="a" style="left:0;top:315px;width:206px;height:21px;background:#f5f5f5"></div>
 <svg class="a" style="left:9px;top:321px" width="6" height="9" viewBox="0 0 6 9"><path d="M1.2 0.8 L4.8 4.3 L1.2 7.8" fill="none" stroke="#5d666f" stroke-width="1.1"/></svg>
 <svg class="a" style="left:30px;top:319px" width="17" height="13" viewBox="0 0 17 13"><rect x="0" y="4" width="7" height="5" fill="#45aaa8"/><rect x="8.25" y="3" width="3" height="3" fill="#808080"/><rect x="8.25" y="7.1" width="3" height="3" fill="#30a5a5"/><rect x="12.7" y="1" width="3.2" height="3" fill="#4b0a82"/><rect x="12.7" y="5.1" width="3.2" height="3" fill="#a21fc0"/><rect x="12.7" y="9.3" width="3.2" height="3" rx="0.8" fill="#f00030"/></svg>
 <div class="a t" style="left:54px;top:316px">MODE_CMD</div>
 <svg class="a" style="left:9px;top:342px" width="6" height="9" viewBox="0 0 6 9"><path d="M1.2 0.8 L4.8 4.3 L1.2 7.8" fill="none" stroke="#5d666f" stroke-width="1.1"/></svg>
 <svg class="a" style="left:30px;top:340px" width="17" height="13" viewBox="0 0 17 13"><rect x="0" y="4" width="7" height="5" fill="#45aaa8"/><rect x="8.25" y="3" width="3" height="3" fill="#808080"/><rect x="8.25" y="7.1" width="3" height="3" fill="#30a5a5"/><rect x="12.7" y="1" width="3.2" height="3" fill="#4b0a82"/><rect x="12.7" y="5.1" width="3.2" height="3" fill="#a21fc0"/><rect x="12.7" y="9.3" width="3.2" height="3" rx="0.8" fill="#f00030"/></svg>
 <div class="a t" style="left:54px;top:337px">MODE_STATE</div>
 <div class="a" style="left:0;top:357px;width:206px;height:21px;background:#f5f5f5"></div>
 <svg class="a" style="left:9px;top:363px" width="6" height="9" viewBox="0 0 6 9"><path d="M1.2 0.8 L4.8 4.3 L1.2 7.8" fill="none" stroke="#5d666f" stroke-width="1.1"/></svg>
 <svg class="a" style="left:30px;top:361px" width="17" height="13" viewBox="0 0 17 13"><rect x="0" y="4" width="7" height="5" fill="#45aaa8"/><rect x="8.25" y="3" width="3" height="3" fill="#808080"/><rect x="8.25" y="7.1" width="3" height="3" fill="#30a5a5"/><rect x="12.7" y="1" width="3.2" height="3" fill="#4b0a82"/><rect x="12.7" y="5.1" width="3.2" height="3" fill="#a21fc0"/><rect x="12.7" y="9.3" width="3.2" height="3" rx="0.8" fill="#f00030"/></svg>
 <div class="a t" style="left:54px;top:358px">PUMP1</div>
 <svg class="a" style="left:9px;top:384px" width="6" height="9" viewBox="0 0 6 9"><path d="M1.2 0.8 L4.8 4.3 L1.2 7.8" fill="none" stroke="#5d666f" stroke-width="1.1"/></svg>
 <svg class="a" style="left:30px;top:382px" width="17" height="13" viewBox="0 0 17 13"><rect x="0" y="4" width="7" height="5" fill="#45aaa8"/><rect x="8.25" y="3" width="3" height="3" fill="#808080"/><rect x="8.25" y="7.1" width="3" height="3" fill="#30a5a5"/><rect x="12.7" y="1" width="3.2" height="3" fill="#4b0a82"/><rect x="12.7" y="5.1" width="3.2" height="3" fill="#a21fc0"/><rect x="12.7" y="9.3" width="3.2" height="3" rx="0.8" fill="#f00030"/></svg>
 <div class="a t" style="left:54px;top:379px">PUMP2</div>
 <div class="a" style="left:0;top:399px;width:206px;height:21px;background:#f5f5f5"></div>
 <svg class="a" style="left:9px;top:405px" width="6" height="9" viewBox="0 0 6 9"><path d="M1.2 0.8 L4.8 4.3 L1.2 7.8" fill="none" stroke="#5d666f" stroke-width="1.1"/></svg>
 <svg class="a" style="left:30px;top:403px" width="17" height="13" viewBox="0 0 17 13"><rect x="0" y="4" width="7" height="5" fill="#45aaa8"/><rect x="8.25" y="3" width="3" height="3" fill="#808080"/><rect x="8.25" y="7.1" width="3" height="3" fill="#30a5a5"/><rect x="12.7" y="1" width="3.2" height="3" fill="#4b0a82"/><rect x="12.7" y="5.1" width="3.2" height="3" fill="#a21fc0"/><rect x="12.7" y="9.3" width="3.2" height="3" rx="0.8" fill="#f00030"/></svg>
 <div class="a t" style="left:54px;top:399px">SETPOINT</div>
</div>
<div class="a" style="left:1264px;top:259px;width:16px;height:403px;background:#f3f4f6"></div>
<div class="a" style="left:1264px;top:259px;width:16px;height:15px;background:#edeef0"></div>
<div class="a" style="left:1264px;top:647px;width:16px;height:15px;background:#edeef0"></div>
<div class="a" style="left:1264px;top:274px;width:16px;height:266px;background:#d5dadf"></div>
<svg class="a" style="left:1265px;top:260px" width="14" height="10" viewBox="0 0 14 10"><path d="M1 7.8 L7 1.6 L13 7.8" fill="none" stroke="#b0b0b0" stroke-width="1.3"/></svg>
<svg class="a" style="left:1265px;top:650px" width="14" height="10" viewBox="0 0 14 10"><path d="M1 2.2 L7 8.4 L13 2.2" fill="none" stroke="#b0b0b0" stroke-width="1.3"/></svg>
<div class="a lt" style="left:866px;top:664px;width:416px;height:31px"></div>
<!--RIGHT-->
<!-- BOTTOM -->
<div class="a" style="left:0;top:695px;width:1282px;height:1px;background:#e4e8eb"></div>
<div class="a" style="left:364px;top:695px;width:501px;height:1px;background:#f0f2f3"></div>
<div class="a" style="left:0;top:696px;width:1282px;height:1px;background:#6b7887"></div>
<div class="a" style="left:0;top:697px;width:1282px;height:55px;background:#8491a0"></div>
<div class="a btn" style="left:16px;top:709px;width:80px;height:32px"></div>
<div class="a" style="left:45px;top:715px;width:22px;height:22px;border-radius:50%;background:#f4f6f7"></div>
<div class="a" style="left:45px;top:714px;width:22px;height:22px;border-radius:50%;background:#5b6d7a"></div>
<div class="a t b" style="left:45px;top:716px;width:22px;text-align:center;font-size:18px;line-height:20px;color:#d8dde1;margin-top:0;transform:none">?</div>
<div class="a btn" style="left:1186px;top:709px;width:80px;height:32px"></div>
<div class="a t" style="left:1186px;top:717.5px;width:80px;text-align:center;font-size:10.7px;margin-top:0;color:#44505c;transform:none">Close</div>
<!--BOTTOM-->
</div>
<div class="a frame"></div>
</body></html>
